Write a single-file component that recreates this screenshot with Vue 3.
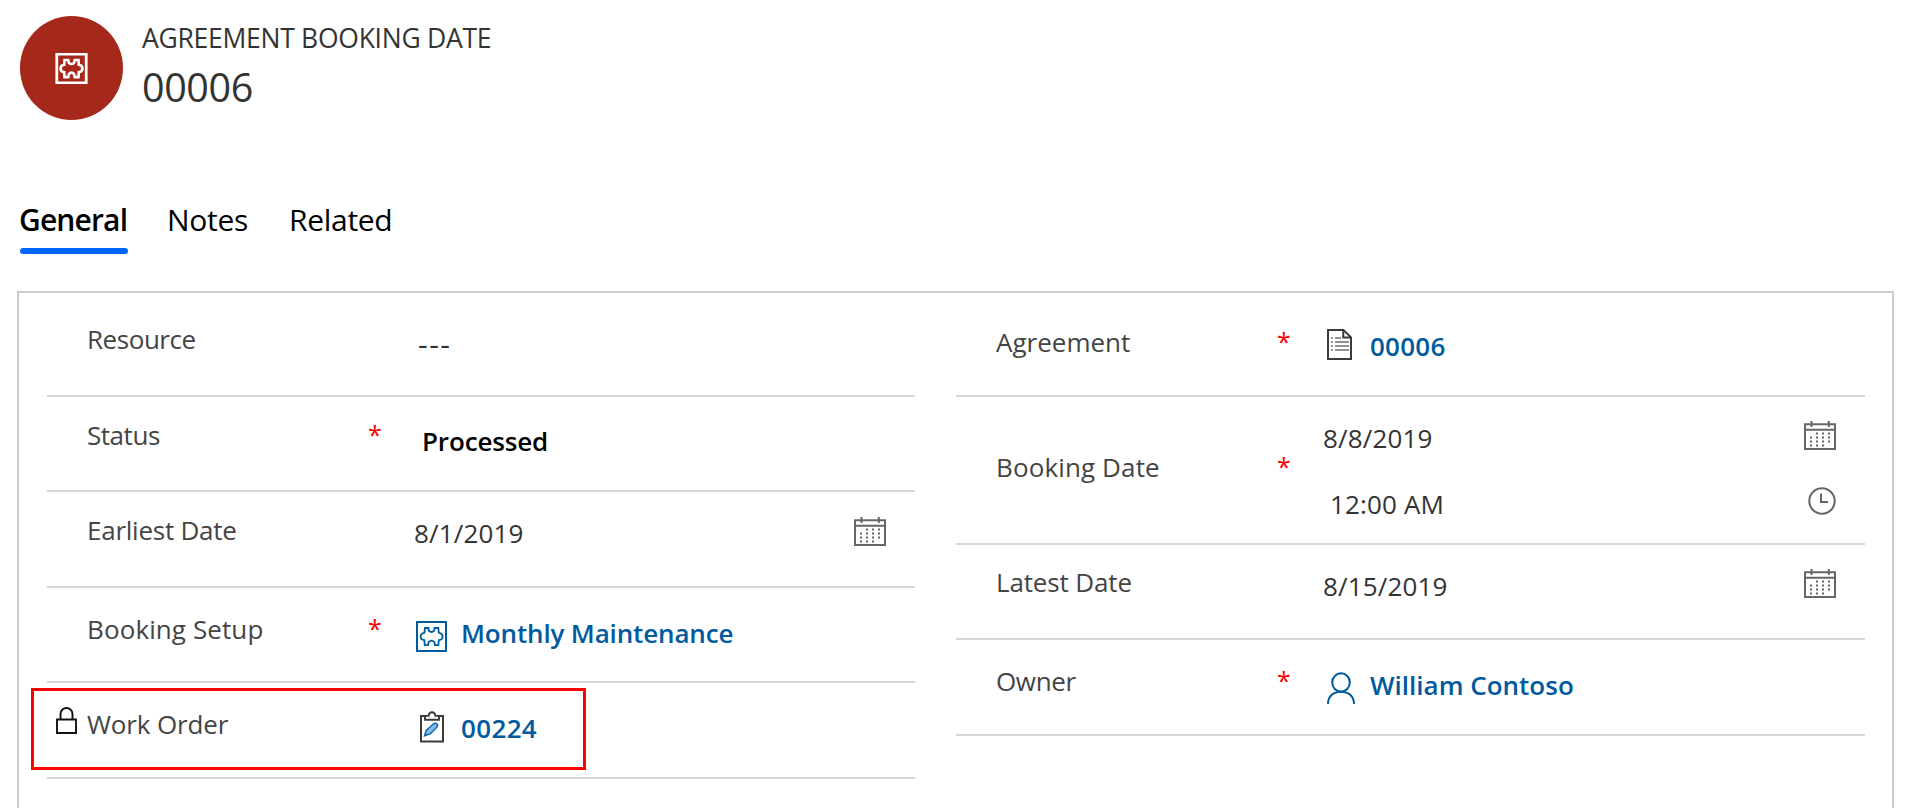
<script setup>
const tabs = ['General', 'Notes', 'Related']

const columns = [
  [
    { id: 'resource', label: 'Resource', value: '---' },
    { id: 'status', label: 'Status', required: true, value: 'Processed' },
    { id: 'earliest', label: 'Earliest Date', value: '8/1/2019', picker: true },
    { id: 'setup', label: 'Booking Setup', required: true, value: 'Monthly Maintenance', icon: 'puzzle' },
    { id: 'order', label: 'Work Order', value: '00224', icon: 'clipboard', locked: true },
  ],
  [
    { id: 'agreement', label: 'Agreement', required: true, value: '00006', icon: 'document' },
    { id: 'booking', label: 'Booking Date', required: true, value: '8/8/2019', time: '12:00 AM', picker: true },
    { id: 'latest', label: 'Latest Date', value: '8/15/2019', picker: true },
    { id: 'owner', label: 'Owner', required: true, value: 'William Contoso', icon: 'person' },
  ],
]

const dots = [
  [12, 12], [18, 12], [24, 12],
  [6, 16], [12, 16], [18, 16], [24, 16],
  [6, 20], [12, 20], [18, 20], [24, 20],
  [6, 24], [12, 24], [18, 24],
]
</script>

<template>
  <main class="page">
    <header class="header">
      <div class="avatar">
        <svg width="33" height="31" viewBox="0 0 33 31" fill="none" stroke="#fff">
          <path d="M1.8 1H31.2V30H1.8Z" stroke-width="2.8" />
          <path d="M9.500 7H13.300l.5 2.700q2.700 2.600 5.400 0L19.700 7H23.500l.3 4.800q3.600.5 3.600 3.700t-3.600 3.700l-.3 4.900H19.700l-.5-2.900q-2.700-3.200-5.400 0l-.5 2.900H9.500l-.3-4.900q-3.600-.5-3.600-3.700t3.600-3.700Z" stroke-width="2.6" />
        </svg>
      </div>
      <div class="heading">
        <div class="entity">AGREEMENT BOOKING DATE</div>
        <h1 class="name">00006</h1>
      </div>
    </header>

    <nav class="tabs">
      <a v-for="(tab, i) in tabs" :key="tab" class="tab" :class="['tab--' + tab.toLowerCase(), { 'tab--active': i === 0 }]"><span>{{ tab }}</span></a>
    </nav>

    <section class="panel">
      <div v-for="(rows, c) in columns" :key="c" class="column">
        <div v-for="row in rows" :key="row.id" class="row" :class="'row--' + row.id">
          <div class="lead">
            <svg v-if="row.locked" class="lock" width="21" height="27" viewBox="0 0 21 27" fill="none" stroke="#111" stroke-width="1.9">
              <path d="M1 12.5H20V26H1Z" />
              <path d="M4.5 12.5V7a6 6 0 0 1 12 0V12.5" />
            </svg>
          </div>
          <div class="label"><span>{{ row.label }}</span></div>
          <div class="required">{{ row.required ? '*' : '' }}</div>
          <div class="field">
            <div v-if="row.icon" class="slot">
              <svg v-if="row.icon === 'puzzle'" width="31" height="31" viewBox="0 0 31 31" fill="none" stroke="#005a9e">
                <path d="M1 1H30V30H1Z" stroke-width="2" />
                <path d="M9 7h3.4l.4 2.7q2.700 2.600 5.400 0L18.600 7H22.300l.5 4.800q3.800.5 3.800 3.700t-3.800 3.700l-.5 4.900H18.900l-.5-2.900q-2.900-3.200-5.800 0l-.5 2.900H8.700l-.3-4.900q-3.800-.5-3.800-3.700t3.800-3.700Z" stroke-width="1.8" />
              </svg>
              <svg v-else-if="row.icon === 'clipboard'" width="31" height="32" viewBox="0 0 31 32" fill="none">
                <path d="M9 5H5V30.500H27V5H23" stroke="#3b3b3b" stroke-width="2" />
                <path d="M9 4.900H12.600Q12.900 1.200 16 1.200T19.400 4.900H23V8.700H9Z" stroke="#3b3b3b" stroke-width="1.900" />
                <path d="M8.600 24.700L10.200 19.400 17.600 12.800Q19.500 11.800 20.700 12.800T21.500 15.500L14.500 22.700Z" fill="#83beec" stroke="#0f62b0" stroke-width="1.500" />
              </svg>
              <svg v-else-if="row.icon === 'document'" width="31" height="32" viewBox="0 0 31 32" fill="none">
                <path d="M3 2H18.500L26 9.500V31H3Z" stroke="#3b3b3b" stroke-width="2" />
                <path d="M18.300 2V9.500H26" stroke="#3b3b3b" stroke-width="2" />
                <path d="M6 10h2M10 10h6M6 14h2M10 14h14M6 18h2M10 18h14M6 22h2M10 22h14" stroke="#707070" stroke-width="1.500" />
              </svg>
              <svg v-else width="31" height="32" viewBox="0 0 31 32" fill="none" stroke="#005a9e" stroke-width="2">
                <ellipse cx="16" cy="10.500" rx="8.800" ry="9.200" />
                <path d="M3 32C3 24.500 8 19.700 16 19.700S29 24.500 29 32" />
              </svg>
            </div>
            <div class="values">
              <div class="value" :class="{ 'value--link': row.icon }"><span>{{ row.value }}</span></div>
              <div v-if="row.time" class="value value--time"><span>{{ row.time }}</span></div>
            </div>
          </div>
          <div v-if="row.picker" class="pickers">
            <svg width="32" height="29" viewBox="0 0 32 29" fill="none" stroke="#666">
              <path d="M1 3.200H31V28H1Z M1 8.800H31" stroke-width="2" />
              <path d="M7.500 0V6M24.800 0V6" stroke-width="2" />
              <rect v-for="([x, y], i) in dots" :key="i" :x="x" :y="y - 0.5" width="2" height="2" fill="#666" stroke="none" />
            </svg>
            <svg v-if="row.time" class="clock" width="28" height="28" viewBox="0 0 28 28" fill="none" stroke="#666" stroke-width="2">
              <circle cx="14" cy="14" r="12.700" />
              <path d="M13 6.500V15H20" />
            </svg>
          </div>
        </div>
      </div>
    </section>
  </main>
</template>

<style>
body {
  margin: 0;
  overflow: hidden;
  background: #fff;
}
</style>

<style scoped>
.page {
  box-sizing: border-box;
  height: 808px;
  overflow: hidden;
  padding: 16px 16px 0 17px;
  font-family: "Open Sans", "Noto Sans", sans-serif;
  color: #333;
  white-space: nowrap;
}
.header {
  display: flex;
  height: 184px;
  padding-left: 3px;
}
.avatar {
  display: flex;
  align-items: center;
  justify-content: center;
  width: 103px;
  height: 104px;
  border-radius: 50%;
  background: #a4291a;
}
.heading { margin: 4px 0 0 19px; }
.entity {
  font-size: 26.5px;
  line-height: 36px;
  letter-spacing: -0.27px;
}
.name {
  margin: 4px 0 0;
  font-size: 39.5px;
  font-weight: 400;
  line-height: 54px;
  letter-spacing: -0.4px;
}
.tabs {
  display: flex;
  height: 91px;
  padding-left: 3px;
  color: #000;
}
.tab {
  height: 54px;
  font-size: 30px;
  line-height: 40px;
  letter-spacing: -0.3px;
}
.tab--general { width: 108px; margin-right: 39px; }
.tab--notes { width: 83px; margin-right: 39px; }
.tab--active {
  font-weight: 600;
  letter-spacing: -0.85px;
}
.tab--active span { margin-left: -1px; }
.tab--active::after {
  content: "";
  display: block;
  height: 6px;
  margin-top: 8px;
  border-radius: 3px;
  background: #06f;
}
.panel {
  display: flex;
  gap: 41px;
  height: 560px;
  box-sizing: border-box;
  padding: 0 27px 0 28px;
  border: 2px solid #ccc;
}
.column:first-child { width: 868px; }
.column:last-child { width: 909px; }
.row {
  box-sizing: border-box;
  position: relative;
  display: grid;
  grid-template-columns: 40px 281px 46px 1fr auto;
  align-items: start;
  height: 96px;
  padding-right: 29px;
  border-bottom: 2px solid #d7d7d7;
  font-size: 26px;
  line-height: 36px;
}
.label { color: #444; }
.required {
  font-size: 25px;
  color: #f00;
}
.field { display: flex; align-items: flex-start; }
.slot { width: 45px; margin-left: 2px; line-height: 0; }
.value { letter-spacing: 0.15px; }
.value--link { font-weight: 600; color: #005a9e; }
.pickers {
  display: flex;
  flex-direction: column;
  align-items: flex-end;
}
.lock { display: block; margin: 24px 0 0 9px; }
.clock { margin-top: 37px; }

.row--resource, .row--agreement { height: 104px; }
.row--status, .row--setup, .row--latest { height: 95px; }
.row--booking { height: 148px; }

.row--resource .label { margin-top: 28px; letter-spacing: -0.45px; }
.row--resource .values { margin: 33px 0 0 4px; }
.row--resource .value { font-size: 30px; letter-spacing: 1.5px; }
.row--status .label { margin-top: 20px; letter-spacing: -0.45px; }
.row--status .required { margin-top: 19px; }
.row--status .values { margin: 26px 0 0 8px; font-weight: 600; color: #000; }
.row--status .value { letter-spacing: -0.15px; }
.row--earliest .label { margin-top: 20px; letter-spacing: -0.25px; }
.row--earliest .values { margin-top: 23px; }
.row--earliest .pickers { margin-top: 25px; }
.row--setup .label { margin-top: 23px; letter-spacing: 0.1px; }
.row--setup .required { margin-top: 22px; }
.row--setup .values { margin-top: 27px; }
.row--setup .value { letter-spacing: -0.15px; }
.row--setup .slot { margin-top: 33px; }
.row--order .label { margin-top: 23px; letter-spacing: -0.15px; }
.row--order .values { margin-top: 27px; }
.row--order .value { letter-spacing: 0.35px; }
.row--order .slot { margin-top: 28px; }
.row--agreement .label { margin-top: 31px; }
.row--agreement .required { margin-top: 30px; }
.row--agreement .values { margin-top: 35px; }
.row--agreement .value { letter-spacing: 0.25px; }
.row--agreement .slot { margin-top: 35px; }
.row--booking .label { margin-top: 52px; letter-spacing: 0.12px; }
.row--booking .required { margin-top: 51px; }
.row--booking .values { margin-top: 23px; }
.row--booking .value--time { margin: 30px 0 0 7px; }
.row--booking .pickers, .row--latest .pickers { margin-top: 24px; }
.row--latest .label { margin-top: 19px; letter-spacing: -0.15px; }
.row--latest .values { margin-top: 23px; }
.row--owner .label { margin-top: 23px; letter-spacing: -0.35px; }
.row--owner .required { margin-top: 22px; }
.row--owner .values { margin-top: 27px; }
.row--owner .value { letter-spacing: 0; }
.row--owner .slot { margin-top: 32px; }

/* Highlight frame around the work order */
.row--order::after {
  content: "";
  position: absolute;
  box-sizing: border-box;
  top: 5px;
  left: -16px;
  width: 555px;
  height: 82px;
  border: 3px solid #f00;
}
</style>
